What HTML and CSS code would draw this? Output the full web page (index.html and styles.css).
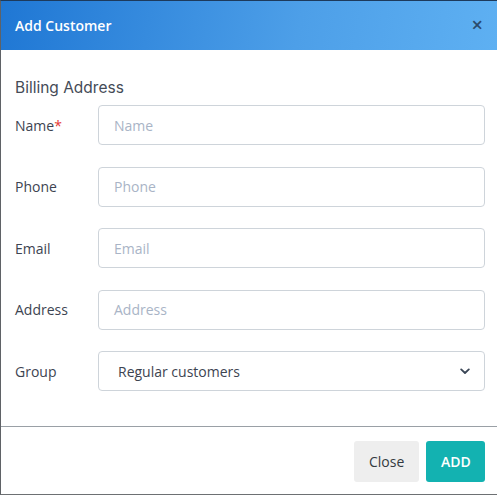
FILE: index.html
```html
<!DOCTYPE html>
<html>
<head>
<meta charset="utf-8">
<link rel="stylesheet" href="styles.css">
</head>
<body>
<div class="modal">
  <div class="modal-header">
    <span class="modal-title">Add Customer</span>
    <span class="close-x">&times;</span>
  </div>
  <div class="modal-body">
    <div class="section-title">Billing Address</div>
    <div class="row">
      <label class="lbl">Name<span class="req">*</span></label>
      <div class="field"><span class="ph">Name</span></div>
    </div>
    <div class="row">
      <label class="lbl">Phone</label>
      <div class="field"><span class="ph">Phone</span></div>
    </div>
    <div class="row">
      <label class="lbl">Email</label>
      <div class="field"><span class="ph">Email</span></div>
    </div>
    <div class="row">
      <label class="lbl">Address</label>
      <div class="field"><span class="ph">Address</span></div>
    </div>
    <div class="row">
      <label class="lbl">Group</label>
      <div class="field select"><span class="val">Regular customers</span>
        <svg class="chev" width="10" height="7" viewBox="0 0 10 7"><path d="M1.2 1.4 L5 5 L8.8 1.4" fill="none" stroke="#3a4656" stroke-width="1.8" stroke-linecap="round" stroke-linejoin="round"/></svg>
      </div>
    </div>
  </div>
  <div class="modal-footer">
    <button class="btn btn-close">Close</button>
    <button class="btn btn-add">ADD</button>
  </div>
</div>
</body>
</html>
```
FILE: styles.css
```css
html, body {
  margin: 0;
  padding: 0;
  background: #ffffff;
}
body {
  font-family: "Open Sans", "Noto Sans", sans-serif;
  color: #3d4451;
}
.modal {
  width: 497px;
  height: 495px;
  border-top: 1px solid #1d3a5c;
  border-left: 1px solid #5f6266;
  border-bottom: 1px solid #6d7073;
  box-sizing: border-box;
  display: flex;
  flex-direction: column;
  background: #fff;
}
.modal-header {
  height: 49px;
  flex: none;
  display: flex;
  align-items: center;
  justify-content: space-between;
  padding: 0 14px 0 14px;
  background: linear-gradient(100deg, #1f77d4 0%, #4d9fe8 60%, #5eb0f2 100%);
}
.modal-title {
  color: #ffffff;
  font-size: 14px;
  font-weight: 600;
}
.close-x {
  color: #2b4a6b;
  font-size: 20px;
  font-weight: 600;
  line-height: 1;
  margin-top: -1px;
}
.modal-body {
  flex: 1;
  padding: 28px 12px 0 14px;
}
.section-title {
  font-family: "Inter", "Lato", sans-serif;
  font-size: 15.5px;
  color: #454b57;
  line-height: 20px;
  margin-bottom: 7px;
}
.row {
  display: flex;
  align-items: center;
  height: 40px;
  margin-bottom: 21.5px;
}
.lbl {
  width: 83px;
  flex: none;
  font-size: 14px;
  color: #3d4451;
}
.req {
  color: #e53935;
}
.field {
  flex: 1;
  height: 40px;
  box-sizing: border-box;
  border: 1px solid #ced4da;
  border-radius: 4px;
  display: flex;
  align-items: center;
  padding: 0 14px 0 15px;
  font-size: 14px;
}
.ph {
  color: #a9b4c6;
}
.select {
  justify-content: space-between;
  padding-left: 19px;
}
.val {
  color: #3d4451;
}
.chev {
  display: block;
}
.modal-footer {
  flex: none;
  height: 68px;
  border-top: 1px solid #9aa0a6;
  display: flex;
  justify-content: flex-end;
  align-items: flex-start;
  gap: 7px;
  padding: 14px 12px 0 0;
  box-sizing: border-box;
}
.btn {
  height: 41px;
  border: none;
  border-radius: 3px;
  font-family: "Open Sans", "Noto Sans", sans-serif;
  font-size: 14px;
  padding: 0 15px;
}
.btn-close {
  background: #eeeeee;
  color: #333a40;
  width: 65px;
}
.btn-add {
  background: #13b2b1;
  color: #ffffff;
  font-weight: 600;
  width: 59px;
}
```
